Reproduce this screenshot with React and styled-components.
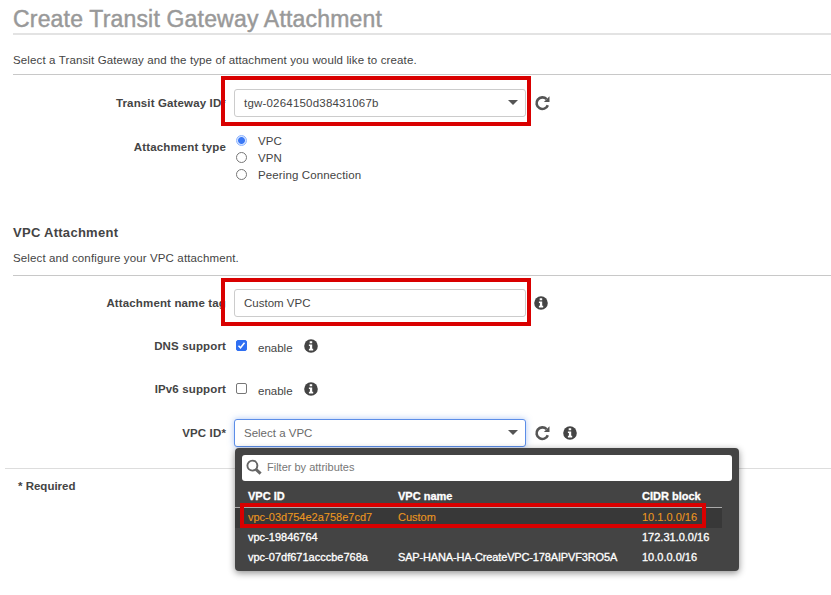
import React from "react";
import styled, { createGlobalStyle } from "styled-components";

const GlobalStyle = createGlobalStyle`
  * { box-sizing: border-box; }
  body {
    margin: 0;
    background: #fff;
    color: #444;
    font-family: "Liberation Sans", Arial, Helvetica, sans-serif;
    font-size: 11.5px;
    overflow: hidden;
  }
`;

const Page = styled.main`
  width: 831px;
  height: 595px;
  overflow: hidden;
  display: flex;
  flex-direction: column;
  white-space: nowrap;
`;

const Title = styled.h1`
  margin: 0 0 0 13px;
  height: 35px;
  padding-top: 5px;
  border-bottom: 2px solid #e3e3e3;
  color: #999;
  font-size: 23px;
  line-height: 28px;
  font-weight: 400;
  letter-spacing: 0.18px;
  -webkit-text-stroke: 0.45px #999;
`;

const Intro = styled.p`
  margin: 0 0 0 13px;
  height: ${(p) => p.$height}px;
  padding-top: ${(p) => p.$top}px;
  border-bottom: 1px solid #c8c8c8;
  line-height: 16px;
  letter-spacing: 0.13px;
`;

const SectionTitle = styled.h2`
  margin: 0 0 0 13px;
  height: 24px;
  font-size: 13px;
  line-height: 16px;
  font-weight: 700;
  letter-spacing: 0.28px;
`;

const Row = styled.div`
  display: grid;
  grid-template-columns: 226px 1fr;
  column-gap: 8px;
  align-items: start;
  height: ${(p) => p.$height}px;
  padding-top: ${(p) => p.$top || 0}px;
`;

const Label = styled.label`
  text-align: right;
  font-weight: 700;
  line-height: 28px;
  letter-spacing: 0.14px;
`;

const Controls = styled.div`
  position: relative;
  display: flex;
  align-items: center;
  min-height: 28px;
`;

const Field = styled.div`
  width: 292px;
  height: 28px;
  padding: 0 7px 0 9px;
  display: flex;
  align-items: center;
  justify-content: space-between;
  background: #fff;
  border: 1px solid ${(p) => (p.$focused ? "#5b8de8" : "#ccc")};
  border-radius: 3px;
  color: ${(p) => (p.$focused ? "#6a6a6a" : "#444")};
  box-shadow: ${(p) => (p.$focused ? "0 0 6px rgba(91, 141, 232, 0.5)" : "none")};
  letter-spacing: ${(p) => p.$spacing || 0}px;
`;

const Caret = styled.span`
  margin-bottom: 1px;
  border: 5px solid transparent;
  border-top: 5px solid #555;
  border-bottom: 0;
`;

const Outline = styled.div`
  position: absolute;
  left: ${(p) => p.$x}px;
  top: ${(p) => p.$y}px;
  width: ${(p) => p.$w}px;
  height: ${(p) => p.$h}px;
  border: 4px solid #d90000;
  pointer-events: none;
`;

const IconSlot = styled.span`
  display: flex;
  margin-left: ${(p) => p.$gap}px;
`;

const RadioList = styled.div`
  display: flex;
  flex-direction: column;
  padding: 0 0 0 2px;
`;

const RadioOption = styled.label`
  display: flex;
  align-items: center;
  gap: 11px;
  height: 16.7px;
  letter-spacing: 0.12px;
`;

const Radio = styled.input`
  appearance: none;
  margin: -1px 0 0;
  width: 11px;
  height: 11px;
  border: 1px solid #777;
  border-radius: 50%;
  background: #fff;
  &:checked {
    border-color: #8db4ff;
    background: radial-gradient(circle, #3b78f5 0 3px, #d5e4ff 3.8px);
  }
`;

const CheckBox = styled.span`
  width: 11px;
  height: 11px;
  margin: -1px 11px 0 2px;
  display: flex;
  border: 1px solid ${(p) => (p.$checked ? "#2f6ff2" : "#777")};
  border-radius: 2px;
  background: ${(p) => (p.$checked ? "#2f6ff2" : "#fff")};
`;

const Enable = styled.span`
  line-height: 14px;
  padding-top: 4px;
`;

const Footer = styled.footer`
  margin-left: 5px;
  padding: 9px 0 0 13px;
  border-top: 1px solid #ddd;
  font-weight: 700;
  line-height: 16px;
`;

const Menu = styled.div`
  position: absolute;
  left: 1px;
  top: 29px;
  width: 504px;
  height: 123px;
  padding-top: 7px;
  background: #444;
  border-radius: 4px;
  box-shadow: 0 2px 7px rgba(0, 0, 0, 0.45);
  color: #fff;
  font-size: 11px;
`;

const Search = styled.div`
  margin: 0 7px;
  height: 26px;
  padding: 0 0 2px 4px;
  display: flex;
  align-items: center;
  gap: 5px;
  border-radius: 3px;
  background: #fff;
  color: #777;
`;

const MenuRow = styled.div`
  display: grid;
  grid-template-columns: 150px 244px 1fr;
  align-items: center;
  width: 487px;
  height: 20px;
  padding: 0 0 2px 13px;
  color: ${(p) => (p.$selected ? "#ec971f" : "#fff")};
  background: ${(p) => (p.$selected ? "#383838" : "transparent")};
  -webkit-text-stroke: ${(p) => (p.$selected ? "0.1px" : "0.3px")};
`;

const MenuHead = styled(MenuRow)`
  height: 27px;
  padding-top: 4px;
  padding-bottom: 0;
  border-bottom: 1px solid #aaa;
  font-weight: 700;
`;

const Cell = styled.span`
  letter-spacing: ${(p) => p.$spacing || 0}px;
`;

const Refresh = () => (
  <svg width="16" height="16" viewBox="0 0 16 16">
    <path d="M12.6 4.2A5.8 5.8 0 1 0 13.8 10.2" fill="none" stroke="#555" strokeWidth="2.6" />
    <path d="M15.5 1.2V7H9.9Z" fill="#555" />
  </svg>
);

const Info = () => (
  <svg width="14" height="14" viewBox="0 0 14 14">
    <circle cx="7" cy="7" r="6.8" fill="#444" />
    <path d="M5.7 2.3h2.5v2H5.7zM4.9 5.5h3.3v4.3h1v1.6H4.9V9.8h1V7.1h-1z" fill="#fff" />
  </svg>
);

const Magnifier = () => (
  <svg width="16" height="16" viewBox="0 0 16 16">
    <circle cx="6.4" cy="6.6" r="5" fill="none" stroke="#666" strokeWidth="1.9" />
    <path d="M10 10.4l4.6 4.2" stroke="#666" strokeWidth="3" />
  </svg>
);

const Check = () => (
  <svg width="9" height="9" viewBox="0 0 9 9">
    <path d="M1.5 4.8l2 2 4-5" fill="none" stroke="#fff" strokeWidth="1.5" />
  </svg>
);

const attachmentTypes = ["VPC", "VPN", "Peering Connection"];

const vpcs = [
  { id: "vpc-03d754e2a758e7cd7", name: "Custom", cidr: "10.1.0.0/16", selected: true },
  { id: "vpc-19846764", name: "", cidr: "172.31.0.0/16" },
  { id: "vpc-07df671acccbe768a", name: "SAP-HANA-HA-CreateVPC-178AIPVF3RO5A", cidr: "10.0.0.0/16" },
];

export default function App() {
  return (
    <>
      <GlobalStyle />
      <Page>
        <Title>Create Transit Gateway Attachment</Title>
        <Intro $height={40} $top={17}>
          Select a Transit Gateway and the type of attachment you would like to create.
        </Intro>
        <Row $height={58} $top={14}>
          <Label>Transit Gateway ID*</Label>
          <Controls>
            <Field $spacing={0.2}>
              tgw-0264150d38431067b
              <Caret />
            </Field>
            <IconSlot $gap={8}><Refresh /></IconSlot>
            <Outline $x={-13} $y={-13} $w={310} $h={50} />
          </Controls>
        </Row>
        <Row $height={92}>
          <Label>Attachment type</Label>
          <RadioList>
            {attachmentTypes.map((name, i) => (
              <RadioOption key={name}>
                <Radio type="radio" name="type" defaultChecked={i === 0} />
                {name}
              </RadioOption>
            ))}
          </RadioList>
        </Row>
        <SectionTitle>VPC Attachment</SectionTitle>
        <Intro $height={27} $top={1}>
          Select and configure your VPC attachment.
        </Intro>
        <Row $height={56} $top={13}>
          <Label>Attachment name tag</Label>
          <Controls>
            <Field>Custom VPC</Field>
            <IconSlot $gap={8}><Info /></IconSlot>
            <Outline $x={-13} $y={-11} $w={310} $h={48} />
          </Controls>
        </Row>
        <Row $height={43}>
          <Label>DNS support</Label>
          <Controls>
            <CheckBox $checked><Check /></CheckBox>
            <Enable>enable</Enable>
            <IconSlot $gap={11}><Info /></IconSlot>
          </Controls>
        </Row>
        <Row $height={44}>
          <Label>IPv6 support</Label>
          <Controls>
            <CheckBox />
            <Enable>enable</Enable>
            <IconSlot $gap={11}><Info /></IconSlot>
          </Controls>
        </Row>
        <Row $height={49}>
          <Label>VPC ID*</Label>
          <Controls>
            <Field $focused>
              Select a VPC
              <Caret />
            </Field>
            <IconSlot $gap={8}><Refresh /></IconSlot>
            <IconSlot $gap={13}><Info /></IconSlot>
            <Menu>
              <Search><Magnifier />Filter by attributes</Search>
              <MenuHead>
                <Cell>VPC ID</Cell>
                <Cell>VPC name</Cell>
                <Cell>CIDR block</Cell>
              </MenuHead>
              {vpcs.map((v) => (
                <MenuRow key={v.id} $selected={v.selected}>
                  <Cell>{v.id}</Cell>
                  <Cell $spacing={v.name.length > 10 ? -0.15 : 0}>{v.name}</Cell>
                  <Cell>{v.cidr}</Cell>
                </MenuRow>
              ))}
              <Outline $x={5} $y={55} $w={466} $h={25} />
            </Menu>
          </Controls>
        </Row>
        <Footer>* Required</Footer>
      </Page>
    </>
  );
}
